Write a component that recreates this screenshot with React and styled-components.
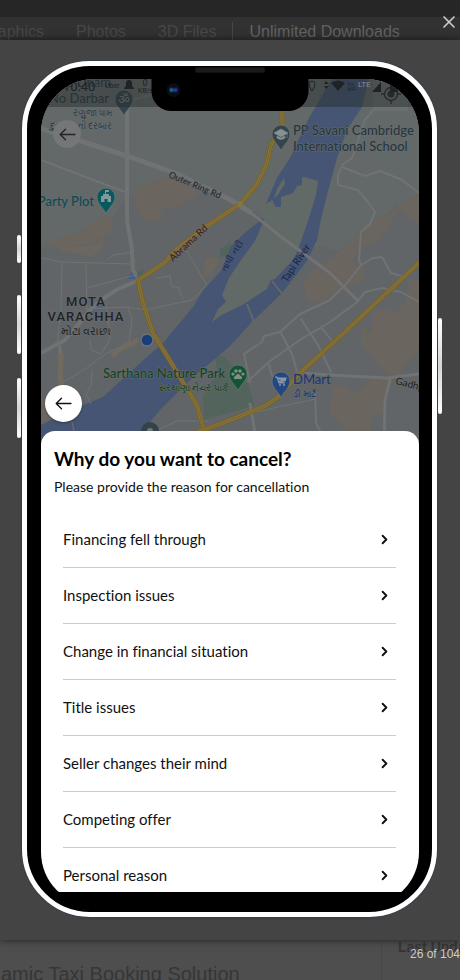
import React from "react";
import styled, { createGlobalStyle, css } from "styled-components";
import { X, ChevronRight } from "lucide-react";

const ui = '"Liberation Sans", Arial, sans-serif';
const brand = 'Lato, "Noto Sans", sans-serif';

const GlobalStyle = createGlobalStyle`
  * { box-sizing: border-box; }
  html { background: #4e4e4e; }
  body { margin: 0; overflow-x: hidden; font-family: ${ui}; }
  button { font: inherit; color: inherit; border: 0; padding: 0; background: none; cursor: pointer; }
`;

const Page = styled.div`
  position: relative;
  min-height: 100vh;
  display: flex;
  flex-direction: column;
  overflow: hidden;
`;

const TopBar = styled.header`
  height: 17px;
  background: #262626;
`;

const Nav = styled.nav`
  display: flex;
  align-items: center;
  height: 23px;
  padding-top: 6px;
  background: #323232;
  font-size: 16px;
  line-height: 20px;
  white-space: nowrap;
  overflow: hidden;
`;

const NavLink = styled.a`
  display: flex;
  justify-content: flex-end;
  overflow: hidden;
  margin-right: 32px;
  color: #484848;
  text-decoration: none;
  ${(p) => p.$cut && css`width: 44px;`}
  ${(p) => p.$last && css`margin-right: 15px;`}
  ${(p) => p.$strong && css`
    margin-right: 0;
    padding-left: 17px;
    border-left: 1px solid #484848;
    color: #626262;
  `}
`;

const CloseButton = styled.button`
  && {
    position: absolute;
    z-index: 3;
    top: 12px;
    right: 1px;
    width: 20px;
    height: 20px;
    display: grid;
    place-items: center;
    color: #ccc;
  }
`;

const Stage = styled.main`
  position: relative;
  z-index: 1;
  padding: 21px 23px 23px 22px;
  background: #444;
  box-shadow: 0 0 8px rgba(0, 0, 0, 0.6);
`;

const Phone = styled.section`
  position: relative;
  max-width: 415px;
  margin: 0 auto;
  padding: 13px 13px 6px 14px;
  border: 5px solid #fff;
  border-radius: 68px;
  background: #000;
  box-shadow: 0 0 1px 1px #34404e;
`;

const SideKey = styled.span`
  position: absolute;
  top: ${(p) => p.$top}px;
  ${(p) => (p.$right ? "right: -10px;" : "left: -10px;")}
  width: 4px;
  height: ${(p) => p.$size}px;
  border-radius: 2px;
  background: linear-gradient(#fff, #d9d5d5 50%, #fff);
  box-shadow: 0 0 1px #34404e;
`;

const Notch = styled.div`
  position: absolute;
  z-index: 2;
  top: 0;
  left: 50%;
  width: 157px;
  height: 45px;
  transform: translateX(-50%);
  border-radius: 0 0 20px 20px;
  background: #000;
`;

const Speaker = styled.span`
  position: absolute;
  top: 1px;
  left: 43px;
  width: 71px;
  height: 6px;
  border: 1px solid #111;
  border-radius: 3px;
  background: #1b1b1b;
`;

const Camera = styled.span`
  position: absolute;
  top: 17px;
  left: 15px;
  width: 14px;
  height: 14px;
  border-radius: 50%;
  background:
    radial-gradient(circle at 5px 7px, #17688f 1px, transparent 3px),
    radial-gradient(circle at 9px 7px, #2338ae 1px, transparent 3px),
    #0b0d12;
`;

const Screen = styled.div`
  overflow: hidden;
  padding-bottom: 14px;
  border-radius: 54px;
  background: #000;
`;

const MapArea = styled.div`
  position: relative;
  height: 366px;
  margin-bottom: -14px;
  overflow: hidden;
  background: #636668;
`;

const MapSvg = styled.svg`
  display: block;
  width: 100%;
  height: 100%;
  font-family: ${brand};
  font-variant-ligatures: none;
`;

const RoundButton = styled.button`
  && {
    position: absolute;
    display: grid;
    place-items: center;
    border-radius: 50%;
    ${(p) => p.$dim ? css`
      top: 41px; left: 12px; width: 28px; height: 28px;
      background: #747677;
      color: #22232f;
    ` : css`
      bottom: 23px; left: 4px; width: 37px; height: 37px;
      background: #fff;
      color: #111;
      box-shadow: 0 1px 3px rgba(0, 0, 0, 0.3);
    `}
  }
`;

const Sheet = styled.div`
  position: relative;
  padding: 16px 23px 0 22px;
  border-radius: 14px 14px 0 0;
  background: #fff;
  color: #111;
  font-family: ${brand};
  font-variant-ligatures: none;
`;

const Heading = styled.div`
  margin: 0 -9px 15px;
`;

const Title = styled.h1`
  margin: 0 0 6px;
  font-size: 19px;
  line-height: 24px;
  font-weight: 700;
  color: #000;
`;

const Subtitle = styled.p`
  margin: 0;
  font-size: 14px;
  line-height: 20px;
`;

const ReasonList = styled.ul`
  margin: 0;
  padding: 0;
  list-style: none;
`;

const ReasonItem = styled.li`
  border-bottom: 1px solid #cbcbcb;
  &:last-child { border-bottom: 0; }
`;

const ReasonButton = styled.button`
  && {
    display: flex;
    align-items: center;
    justify-content: space-between;
    width: 100%;
    padding: 16px 4px 17px 0;
    font-size: 15px;
    line-height: 22px;
    text-align: left;
  }
  ${ReasonItem}:last-child && { padding-bottom: 6px; }
`;

const Footer = styled.footer`
  display: grid;
  grid-template-columns: minmax(0, 382fr) minmax(0, 78fr);
  flex: 1 0 40px;
  min-height: 0;
  max-height: 40px;
  background: #4e4e4e;
  color: #363636;
  white-space: nowrap;
  overflow: hidden;
`;

const ProductName = styled.div`
  padding: 22px 0 0 1px;
  border-right: 1px solid #474747;
  font-size: 20px;
  line-height: 24px;
`;

const Updated = styled.div`
  padding-left: 16px;
  font-size: 14px;
  line-height: 14px;
  font-weight: 700;
  overflow: hidden;
`;

const Counter = styled.div`
  position: absolute;
  z-index: 3;
  right: 0;
  bottom: 18px;
  font-size: 12px;
  line-height: 16px;
  color: #ccc;
`;

const reasons = [
  "Financing fell through",
  "Inspection issues",
  "Change in financial situation",
  "Title issues",
  "Seller changes their mind",
  "Competing offer",
  "Personal reason",
];

function BackArrow() {
  return (
    <svg width="17" height="13" viewBox="0 0 17 13" fill="none" stroke="currentColor" strokeWidth="1.3" strokeLinecap="round" strokeLinejoin="round" aria-hidden="true">
      <path d="M16 6.5H1.5M6.5 1.2L1.2 6.5L6.5 11.8" />
    </svg>
  );
}

function Pin({ x, y, color, children }) {
  return (
    <g transform={`translate(${x} ${y})`}>
      <path d="M0 17 C-2 11 -9 7 -9 0 A9 9 0 0 1 9 0 C9 7 2 11 0 17Z" fill={color} stroke="#737777" strokeWidth=".7" />
      {children}
    </g>
  );
}

function CityMap() {
  const halo = { stroke: "#6b6e70", strokeWidth: 1, paintOrder: "stroke", strokeLinejoin: "round", fontWeight: 500 };
  const yellowA = "M282 107 282 127 271 145 267 163 257 184 240 204 228 212 207 226 177 249 164 263 152 271 138 280 143 303 153 333 197 405 208 445";
  const yellowB = "M422 260 347 330 300 373 277 398 265 406 253 411 220 424 190 435";
  return (
    <MapSvg viewBox="41 79 378 366" preserveAspectRatio="xMidYMin slice" role="img" aria-label="Map of Mota Varachha">
      <rect x="-200" y="79" width="900" height="366" fill="#626567" />
      <path d="M41 79H419V215L397 204 372 228 354 245 335 250 322 246 300 250 265 216 240 203 195 182 163 178 137 190 122 203 110 222 80 234 41 246Z" fill="#626968" />
      <path d="M300 180 318 180 300 250 270 290 222 318 222 300 260 235Z" fill="#626a67" />
      <path d="M419 193 401 204 385 216 370 222 352 240 335 255 310 273 303 284 307 300 319 303 331 296 347 285 365 280 364 270 352 262 360 247 380 240 388 225 400 209 406 217 419 223Z M419 280 409 281 407 300 396 312 383 308 373 314 372 333 361 327 361 343 372 357 383 371 390 376 401 375 405 365 419 350Z M165 177 180 182 200 190 190 200 178 207 164 207 157 222 145 220 139 210 134 202 133 194 142 185Z M105 215 113 220 111 232 95 242 77 245 61 247 41 246 59 238 79 232 92 222Z M333 385 345 386 352 393 364 386 371 379 389 378 382 413 372 418 368 445 344 445 347 430 329 413Z" fill="#6b655f" />
      <path d="M41 240 61 246 86 246 98 242 104 239 103 248 91 257 78 254 64 251Z M208 256 220 260 211 275 204 278 204 263Z M41 390 48 413 65 426 41 445Z" fill="#6b6660" />
      <path d="M220 258 233 252 230 242 220 250Z M203 396 218 372 214 355 225 357 249 385 254 406 204 420Z" fill="#52645c" />
      <path d="M332 79 309 118 297 143 290 158 277 178 268 199 260 221 247 231 231 246 221 271 204 289 193 307 164 342 138 365 103 397 64 413 41 425V445H127L143 430 160 410 193 377 229 347 252 322 282 293 307 261 317 240 321 219 327 195 337 158 347 130 362 107 369 79Z" fill="#455573" />
      <path d="M302 177 308 178 318 181 316 195 309 218 298 250 292 261 275 279 271 280 267 289 253 298 244 304 220 316 212 322 218 309 226 302 222 295 229 278 241 260 255 241 264 220 259 216 266 204 272 200 276 207 281 207 281 197 293 193 297 186 302 185Z" fill="#626a67" />
      <path d="M284 178 277 189 274 198 277 196 285 184Z" fill="#626a67" />
      <path d="M247 304 254 322 M272 281 283 295 M241 304 238 301" stroke="#646866" strokeWidth="2" />
      <path d="M127 279 133 270 136 279Z M151 334 157 331 156 339Z" fill="#3f5f8c" />
      <path d="M92 311 104 304" stroke="#4c638b" strokeWidth="4" />
      <g fill="none" stroke="#707273" strokeLinejoin="round" strokeLinecap="round">
        <path strokeWidth="5" d="M36 127 62 135 127 156 175 173 229 199 250 212" />
        <path strokeWidth="3" d="M240 204 250 212 280 236 330 273 357 300" />
        <path strokeWidth="4" d="M127 104 127 220 132 250 133 270 139 280" />
        <path strokeWidth="4" d="M139 280 116 290 101 300 90 310 78 325 65 340 41 353" />
        <path strokeWidth="3" d="M60 347 60 370 65 397 M300 373 348 376 387 378 419 374 M390 380 385 400 384 445 M250 404 257 445" />
        <path strokeWidth="2" d="M41 160 125 192 M125 102 151 95 M419 193 402 180 380 171 365 176 342 167 338 175 338 185 358 190 367 201 375 212 370 224 361 232 359 260 361 265 347 283 330 300 300 314 280 332 264 336 262 342 244 354 250 382 M342 165 352 158 365 120 383 98" />
        <path strokeWidth="2" d="M248 381 270 361 300 340 330 322 356 303 365 292 382 288 401 292 419 302 M361 265 373 258 382 257 391 273 401 276" />
        <path strokeWidth="2" d="M301 319 318 345 331 372 M281 333 292 354 297 372 M321 327 333 342 M269 365 273 379 M315 390 316 423 322 435" />
        <path strokeWidth="1" d="M41 258 62 262 132 264 133 252 114 255 108 259 M62 262 61 310 57 345 M86 263 87 320 M87 288 135 275 M86 309 128 307 145 310 192 300 207 285 186 250 M157 278 170 276 171 286 179 288 183 300 M128 307 132 320 129 342 102 356 87 368 65 381 M106 302 110 340 101 354 91 350 90 340 M92 370 91 385 86 395 91 404 M152 445 158 430 177 421 208 421 M316 399 282 406 257 412 M72 422 77 445" />
      </g>
      <path d="M61 353 60 380 66 407 M138 340 119 350 112 356" stroke="#706a5f" strokeWidth="5" fill="none" />
      {[yellowA, yellowB].map((d) => (
        <g key={d} fill="none" strokeLinejoin="round">
          <path d={d} stroke="#7a6220" strokeWidth="5" />
          <path d={d} stroke="#857646" strokeWidth="3" />
          <path d={d} stroke="#7a6220" strokeWidth="1" />
        </g>
      ))}
      <circle cx="240" cy="204" r="3" fill="#857448" />
      <path d="M137 273 143 269 143 275 137 277Z" fill="#52645c" />

      <g {...halo}>
        <text x="111" y="87" textAnchor="end" fontSize="13" fill="#2e3b43">Ranuja Dham</text>
        <text x="109" y="103" textAnchor="end" fontSize="13" fill="#2b3a43">Ranuja No Darbar</text>
        <text x="112" y="116" textAnchor="end" fontSize="9" fill="#2c404e">રણુજા ધામ</text>
        <text x="112" y="129" textAnchor="end" fontSize="9" fill="#2c404e">દુઃખીયાનો દરબાર</text>
        <text x="94" y="206" textAnchor="end" fontSize="13" fill="#0b4a52">Party Plot</text>
        <text x="293" y="135" fontSize="13" fill="#26363e">PP Savani Cambridge</text>
        <text x="293" y="151" fontSize="13" fill="#26363e">International School</text>
        <text x="103" y="378" fontSize="13" fill="#124423">Sarthana Nature Park</text>
        <text x="159" y="391" fontSize="9" fill="#124423">સરથાણા નેચર પાર્ક</text>
        <text x="293" y="384" fontSize="13" fill="#183670">DMart</text>
        <text x="293" y="397" fontSize="9" fill="#183670">ડી માર્ટ</text>
        <text x="86" y="306" textAnchor="middle" fontSize="13" fontFamily="Roboto" letterSpacing="1" fill="#202326">MOTA</text>
        <text x="86" y="321" textAnchor="middle" fontSize="13" fontFamily="Roboto" letterSpacing="1" fill="#202326">VARACHHA</text>
        <text x="86" y="335" textAnchor="middle" fontSize="11" fill="#202326">મોટા વરાછા</text>
        <text transform="translate(168 177) rotate(23)" fontSize="9" fill="#26282a">Outer Ring Rd</text>
        <text transform="translate(173 262) rotate(-43)" fontSize="10" fill="#3d2214">Abrama Rd</text>
        <text transform="translate(395 384) rotate(14)" fontSize="10" fill="#222426">Gadhpur Rd</text>
      </g>
      <text transform="translate(287 283) rotate(-57)" fontSize="10" fontWeight="500" fill="#17274a">Tapi River</text>
      <text transform="translate(226 272) rotate(-59)" fontSize="9" fill="#17274a">તાપી નદી</text>

      <Pin x={124} y={99} color="#34434d">
        <text x="0" y="5" textAnchor="middle" fontSize="13" fill="#7b8082">ॐ</text>
      </Pin>
      <Pin x={106} y={197} color="#075960">
        <path d="M-5 5V-1H-3V-3H-1V-7H3V-5H0V-3H3V-1H5V5H1.5V2H-1.5V5Z" fill="#81999a" />
      </Pin>
      <Pin x={281} y={134} color="#34464d">
        <path d="M-7-1 0-5 7-1 0 3Z M-4 2V4Q0 7 4 4V2L0 4Z M6-1V4" fill="#899091" stroke="#899091" strokeWidth=".5" />
      </Pin>
      <Pin x={238} y={374} color="#155335">
        <g fill="#849084">
          <circle cx="-5" cy="0" r="1.6" /><circle cx="-2" cy="-3" r="1.7" />
          <circle cx="2" cy="-3" r="1.7" /><circle cx="5" cy="0" r="1.6" />
          <path d="M0 0C-2 0-2 2-4 3C-5 6-1 5 0 5C1 5 5 6 4 3C2 2 2 0 0 0Z" />
        </g>
      </Pin>
      <Pin x={281} y={381} color="#214883">
        <path d="M-6-4H-4L-2 2H4M-4-3H5L4 0H-3" fill="#8a95a8" stroke="#8a95a8" strokeWidth="1.2" />
        <circle cx="-1" cy="4" r="1" fill="#8a95a8" /><circle cx="3" cy="4" r="1" fill="#8a95a8" />
      </Pin>
      <circle cx="150" cy="431" r="9" fill="#34434a" />
      <circle cx="150" cy="431" r="3" fill="#727678" />
      <circle cx="147" cy="340" r="6.5" fill="#707477" />
      <circle cx="147" cy="340" r="5.3" fill="#173d7a" />

      <rect x="373" y="79" width="35" height="32" fill="#6c6f70" />
      <rect x="-200" y="79" width="900" height="28" fill="#252b2b" opacity=".46" />
      <g fill="none" stroke="#272a2b" strokeWidth="1.4">
        <circle cx="391" cy="94" r="6.5" />
        <path d="M391 84V88M391 100V104M381 94H385M397 94H401" />
      </g>
      <circle cx="391" cy="94" r="3.5" fill="#272a2b" />
      <g fill="#202324">
        <text x="63" y="91" fontSize="13" fontFamily="Roboto">10:40</text>
        <text x="105" y="88" fontSize="7" fontFamily="Roboto">Uber</text>
        <path d="M124 89V88L126 86V83Q126 80 129 80Q132 80 132 83V86L134 88V89Z" />
        <text x="145" y="86" textAnchor="middle" fontSize="9" fontFamily="Roboto">0</text>
        <text x="138" y="93" fontSize="7" fontFamily="Roboto">KB/s</text>
        <path d="M324 84 326 81 329 84ZM324 86 326 89 329 86Z M331 83Q338 78 345 83L338 91Z M372 92 381 82V92Z M390 83H392V81H396V83H398V92H390Z" />
        <text x="347" y="86" fontSize="6" fontFamily="Roboto">Vo</text>
        <text x="347" y="91" fontSize="5" fontFamily="Roboto">WiFi</text>
        <path d="M312 91Q309 87 309 84Q309 81 312 81Q315 81 315 84Q315 87 312 91Z" fill="none" stroke="#202324" />
      </g>
      <text x="358" y="87" fontSize="8" fontFamily="Roboto" fill="#8b8e90">LTE</text>
    </MapSvg>
  );
}

export default function App() {
  return (
    <>
      <GlobalStyle />
      <Page>
        <TopBar />
        <Nav aria-label="Categories">
          <NavLink href="#graphics" $cut>Graphics</NavLink>
          <NavLink href="#photos">Photos</NavLink>
          <NavLink href="#3d-files" $last>3D Files</NavLink>
          <NavLink href="#downloads" $strong>Unlimited Downloads</NavLink>
        </Nav>
        <CloseButton aria-label="Close"><X size={20} strokeWidth={2} /></CloseButton>
        <Stage>
          <Phone aria-label="App preview">
            <SideKey $top={169} $size={28} />
            <SideKey $top={229} $size={59} />
            <SideKey $top={312} $size={60} />
            <SideKey $top={252} $size={96} $right />
            <Notch><Speaker /><Camera /></Notch>
            <Screen>
              <MapArea>
                <CityMap />
                <RoundButton $dim aria-label="Previous screen"><BackArrow /></RoundButton>
                <RoundButton aria-label="Back"><BackArrow /></RoundButton>
              </MapArea>
              <Sheet>
                <Heading>
                  <Title>Why do you want to cancel?</Title>
                  <Subtitle>Please provide the reason for cancellation</Subtitle>
                </Heading>
                <ReasonList>
                  {reasons.map((reason) => (
                    <ReasonItem key={reason}>
                      <ReasonButton>
                        {reason}
                        <ChevronRight size={15} strokeWidth={3} />
                      </ReasonButton>
                    </ReasonItem>
                  ))}
                </ReasonList>
              </Sheet>
            </Screen>
          </Phone>
        </Stage>
        <Footer>
          <ProductName>amic Taxi Booking Solution</ProductName>
          <Updated>Last Update</Updated>
        </Footer>
        <Counter>26 of 104</Counter>
      </Page>
    </>
  );
}
